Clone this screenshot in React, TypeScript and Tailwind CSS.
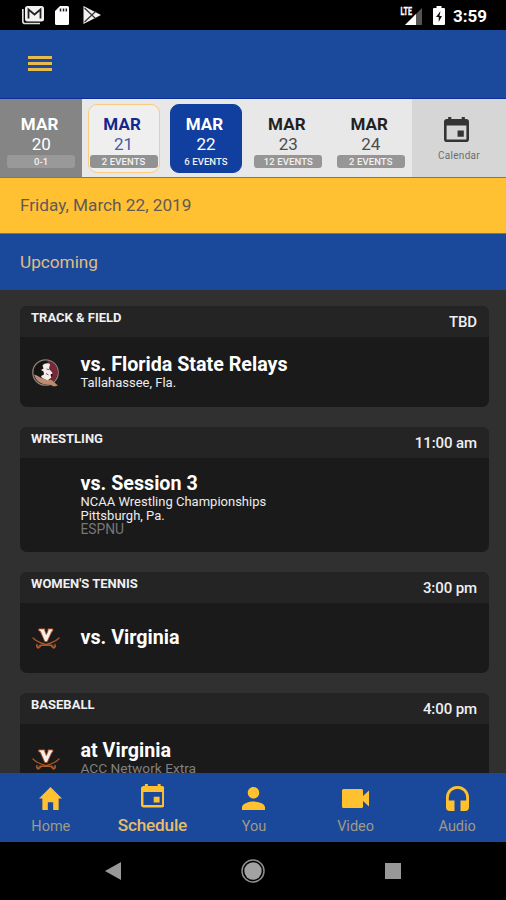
import React from "react";

type Day = { day: string; note: string; kind: "past" | "today" | "selected" | "plain" };

const days: Day[] = [
  { day: "20", note: "0-1", kind: "past" },
  { day: "21", note: "2 EVENTS", kind: "today" },
  { day: "22", note: "6 EVENTS", kind: "selected" },
  { day: "23", note: "12 EVENTS", kind: "plain" },
  { day: "24", note: "2 EVENTS", kind: "plain" },
];

const cellStyle = {
  past: "bg-[#858585]",
  today: "",
  selected: "",
  plain: "",
};
const boxStyle = {
  past: "border-transparent text-white",
  today: "border-[#fcca80] bg-[#efeff0] text-[#14288c]",
  selected: "border-[#113f9f] bg-[#113f9f] text-white",
  plain: "border-transparent text-[#222]",
};
const numberStyle = {
  past: "text-white",
  today: "text-[#4a5a9e]",
  selected: "text-white",
  plain: "text-[#4c4c4c]",
};
const pillStyle = {
  past: "bg-[#999]",
  today: "bg-[#929292]",
  selected: "",
  plain: "bg-[#969696]",
};

function DateCell({ day, note, kind }: Day) {
  return (
    <div className={`flex w-[82.4px] justify-center pt-[5px] ${cellStyle[kind]}`}>
      <div className={`flex h-[69px] w-[72px] flex-col items-center rounded-[9px] border-[1.5px] pt-[8.5px] ${boxStyle[kind]}`}>
        <div className="mr-[3px] text-[17px] font-bold leading-5 tracking-[0.1px]">MAR</div>
        <div className={`mt-[0.5px] text-[17px] leading-5 ${numberStyle[kind]}`}>{day}</div>
        <div className={`mt-px h-[13px] w-[68px] rounded-[3px] text-center text-[9.5px] font-medium leading-[13px] tracking-[0.1px] text-[#f2f2f2] ${pillStyle[kind]}`}>
          {note}
        </div>
      </div>
    </div>
  );
}

function CalendarIcon({ className }: { className: string }) {
  return (
    <svg viewBox="64 64 384 384" fill="currentColor" className={className}>
      <path d="M368 272h-96v96h96v-96zM336 64v32H176V64h-48v32h-24c-22 0-40 18-40 40v272c0 22 18 40 40 40h304c22 0 40-18 40-40V136c0-22-18-40-40-40h-24V64h-48zm72 344H104V196h304v212z" />
    </svg>
  );
}

function SeminoleLogo() {
  return (
    <svg viewBox="0 0 28 28" className="h-7 w-7">
      <circle cx="13.500" cy="13.500" r="12.700" fill="#171313" stroke="#8b827d" strokeWidth="1.300" />
      <path d="M15 1.800c7 .8 11 6 10.400 12.500-.4 4-2.400 7-5.500 9.200l-2.400-3.200 3.400-4.600-2.300-5z" fill="#7c2736" />
      <path d="M2 15.500c3 .2 6.500 3.500 10 4.500l7.500 1 6.500 5.500-4 1-5-2.200C10 26.500 3.700 22 2 15.500z" fill="#bd8b6d" />
      <path d="M10.500 6.500c1.800-2.200 5.200-3 7.500-1.500l-.8 4.500 3.600 5-2.200.8.6 3.500-3.500 2.400-5.700-2.200-1-2 3-1.500-.5-3-2.500-1.500 2.500-1.500z" fill="#f2edeb" />
      <path d="M14.500 10l3 .8M14 14.500l2.500 1.500" stroke="#a64754" strokeWidth="1" />
    </svg>
  );
}

function CavalierLogo() {
  return (
    <svg viewBox="0 0 28 22" className="h-[22px] w-7">
      <g fill="none" stroke="#a9592a" strokeLinecap="round">
        <path d="M1 10c3.500 4 8.500 6.200 22 8.500" strokeWidth="1.200" />
        <path d="M27 10c-3.500 4-8.500 6.200-22 8.500" strokeWidth="1.200" />
        <path d="M5 16.500c-.8 2 .2 3.300 1.500 3.500l2-1.800M23 16.500c.8 2-.2 3.300-1.500 3.500l-2-1.800" strokeWidth="1.500" />
        <path d="M8 17.300h12" strokeWidth="1.600" />
      </g>
      <path d="M6.800.9h6v1.900l1.500 3.700L16 2.800V.9h4.800v1.900l-1 .6L15.200 13.500h-2.400L8.300 3.300 6.800 2.700z" fill="#f5efe9" stroke="#b8522a" strokeWidth=".9" />
    </svg>
  );
}

type GameProps = {
  sport: string;
  time: string;
  logo?: React.ReactNode;
  height: string;
  logoPad: string;
  textPad: string;
  title: string;
  children?: React.ReactNode;
};

function Game(p: GameProps) {
  return (
    <section className={`shrink-0 overflow-hidden rounded-[7px] bg-[#1a1a1a] ${p.height}`}>
      <header className="flex h-[31px] justify-between bg-[#242424] pl-[11px] pr-[12px] text-[#efeff2]">
        <h2 className="pt-[3.500px] text-[13px] font-bold leading-[15px]">{p.sport}</h2>
        <span className="pt-[7.500px] text-[15px] font-medium leading-4 tracking-[-0.100px]">{p.time}</span>
      </header>
      <div className="flex">
        <div className={`w-[60.500px] shrink-0 pl-[12px] ${p.logoPad}`}>{p.logo}</div>
        <div className={`text-[13px] leading-[14px] text-[#ececec] ${p.textPad}`}>
          <h3 className="text-[19.700px] font-bold leading-[22px] text-white">{p.title}</h3>
          {p.children}
        </div>
      </div>
    </section>
  );
}

const tabs = [
  {
    label: "Home",
    icon: (
      <svg viewBox="0 0 24 24" preserveAspectRatio="none" fill="currentColor" className="h-[23px] w-[23px]">
        <path d="M12 0L0 12h3.500v12H9.200v-8h5.600v8h5.700V12H24z" />
      </svg>
    ),
  },
  { label: "Schedule", icon: <CalendarIcon className="h-[23.500px] w-[23.500px]" /> },
  {
    label: "You",
    icon: (
      <svg viewBox="64 64 384 384" fill="currentColor" className="h-[23px] w-[23px]">
        <path d="M256 256c53 0 96-43 96-96s-43-96-96-96-96 43-96 96 43 96 96 96zm0 48c-64 0-192 32-192 96v48h384v-48c0-64-128-96-192-96z" />
      </svg>
    ),
  },
  {
    label: "Video",
    icon: (
      <svg viewBox="0 0 27 19" fill="currentColor" className="h-[19px] w-[27px]">
        <path d="M1.500 0h18A1.500 1.500 0 0 1 21 1.500V7l6-5.500v16L21 12v5.500a1.500 1.500 0 0 1-1.500 1.500h-18A1.500 1.500 0 0 1 0 17.500v-16A1.500 1.500 0 0 1 1.500 0z" />
      </svg>
    ),
  },
  {
    label: "Audio",
    icon: (
      <svg viewBox="0 0 23 25" fill="currentColor" className="h-[25px] w-[23px]">
        <path d="M11.500 0A11.400 11.400 0 0 0 0 11.500V21a4 4 0 0 0 4 4h4.500V14.500H2.800v-3a8.700 8.700 0 0 1 17.400 0v3h-5.700V25H19a4 4 0 0 0 4-4v-9.500A11.400 11.400 0 0 0 11.500 0z" />
      </svg>
    ),
  },
];

export default function App() {
  return (
    <div className="flex h-[900px] w-[506px] flex-col overflow-hidden bg-black font-['Roboto',sans-serif]">
      <div className="flex h-[30px] shrink-0 items-center justify-between pl-[22px] pr-[19px] text-white">
        <div className="flex items-center">
          <svg viewBox="0 0 22 20" className="h-5 w-[22px]">
            <path d="M.8 4v12.500a2 2 0 0 0 2 2H18" fill="none" stroke="#ddd" strokeWidth="1.700" />
            <rect x="3" y="1" width="19" height="15.500" rx="2.500" fill="#f2f2f2" />
            <path d="M6.500 13.500v-9l6 5 6-5v9" fill="none" stroke="#222" strokeWidth="1.800" />
          </svg>
          <svg viewBox="0 0 14 19" className="ml-[11px] h-[19px] w-[14px]">
            <path d="M5 0h7.500A1.500 1.500 0 0 1 14 1.500v16a1.500 1.500 0 0 1-1.500 1.500h-11A1.500 1.500 0 0 1 0 17.500V5z" fill="#fff" />
            <path d="M5.500 2.500v3M8.500 2.500v3M11.300 2.500v3" stroke="#222" strokeWidth="1.500" />
          </svg>
          <svg viewBox="0 0 18 18" className="ml-[14px] h-[18px] w-[18px]">
            <path d="M.5 0L18 9 .5 18z" fill="#f2f2f2" />
            <path d="M1.500 2l11 10.500M1.500 16l11-10.500" stroke="#333" strokeWidth="1.200" />
          </svg>
        </div>
        <div className="flex items-center">
          <svg viewBox="0 0 23 19" className="h-[19px] w-[23px]">
            <path d="M22 2v17H5z" fill="#555" />
            <path d="M16 8v11H5z" fill="#fff" />
            <text x="0.500" y="9" fontSize="11" fontWeight="700" fill="#fff" stroke="#fff" strokeWidth="0.300" textLength="11.500" lengthAdjust="spacingAndGlyphs">LTE</text>
          </svg>
          <svg viewBox="0 0 12 19" className="ml-[9.500px] h-[19px] w-[12px]">
            <path d="M3.500 0h5v2H11a1 1 0 0 1 1 1v15a1 1 0 0 1-1 1H1a1 1 0 0 1-1-1V3a1 1 0 0 1 1-1h2.500z" fill="#fff" />
            <path d="M7.500 5L3 11h2.700v5L9 10H6.500z" fill="#111" />
          </svg>
          <span className="ml-[8px] mt-[2px] text-[17px] font-bold leading-5">3:59</span>
        </div>
      </div>

      <header className="flex h-[69px] shrink-0 items-center border-b border-[#0c2fa0] bg-[#1b4a9d] pl-[28px]">
        <button aria-label="Menu" className="-mt-[2px] flex w-6 flex-col gap-[3px]">
          <span className="h-[3px] bg-[#e8b950]" />
          <span className="h-[3px] bg-[#e8b950]" />
          <span className="h-[3px] bg-[#e8b950]" />
        </button>
      </header>

      <nav className="flex h-[78px] shrink-0 bg-[#e8e8e8]">
        {days.map((d) => (
          <DateCell key={d.day} {...d} />
        ))}
        <div className="flex flex-1 flex-col items-center bg-[#d6d6d6] pt-[18px]">
          <CalendarIcon className="mr-[4px] h-[25px] w-[25px] text-[#343434]" />
          <span className="mt-[8px] text-[10px] leading-3 tracking-[0.300px] text-[#6c6c6c]">Calendar</span>
        </div>
      </nav>

      <div className="h-[57px] shrink-0 border-y border-[#8f7836] bg-[#ffc132] pl-[20px] pt-[16.500px] text-[17.200px] leading-5 text-[#5f5a58]">
        Friday, March 22, 2019
      </div>
      <div className="h-[56px] shrink-0 bg-[#1a499c] pl-[20px] pt-[18px] text-[17.200px] leading-5 text-[#e2bd7e]">
        Upcoming
      </div>

      <main className="flex min-h-0 flex-1 flex-col gap-[20px] overflow-hidden bg-[#303030] pl-[20px] pr-[17px] pt-[16px]">
        <Game sport="TRACK & FIELD" time="TBD" title="vs. Florida State Relays" height="h-[101px]" logoPad="pt-[22px]" textPad="pt-[16.500px]" logo={<SeminoleLogo />}>
          <p>Tallahassee, Fla.</p>
        </Game>
        <Game sport="WRESTLING" time="11:00 am" title="vs. Session 3" height="h-[125px]" logoPad="" textPad="pt-[14.500px]">
          <p className="mt-[0.500px]">NCAA Wrestling Championships</p>
          <p>Pittsburgh, Pa.</p>
          <p className="text-[13.800px] leading-[12px] text-[#777]">ESPNU</p>
        </Game>
        <Game sport="WOMEN'S TENNIS" time="3:00 pm" title="vs. Virginia" height="h-[101px]" logoPad="pt-[25px]" textPad="pt-[23.500px]" logo={<CavalierLogo />} />
        <Game sport="BASEBALL" time="4:00 pm" title="at Virginia" height="h-[110px]" logoPad="pt-[25px]" textPad="pt-[15.500px]" logo={<CavalierLogo />}>
          <p className="-mt-px text-[13.700px] text-[#808080]">ACC Network Extra</p>
        </Game>
      </main>

      <nav className="grid h-[69px] w-[508px] shrink-0 grid-cols-5 bg-[#1a499c]">
        {tabs.map((t) => {
          const active = t.label === "Schedule";
          return (
            <button key={t.label} className="flex flex-col items-center text-[#ffc12f]">
              <span className={`flex items-center justify-center ${active ? "h-[46px]" : "h-[50px]"}`}>{t.icon}</span>
              <span
                className={
                  active
                    ? "-mt-[4px] text-[17.200px] font-medium leading-5 tracking-[-0.200px] text-[#e9bd68]"
                    : "-mt-[6px] text-[14.500px] leading-5 text-[#a09a86]"
                }
              >
                {t.label}
              </span>
            </button>
          );
        })}
      </nav>

      <div className="flex h-[58px] shrink-0 items-center justify-between bg-black pl-[105px] pr-[105px]">
        <svg viewBox="0 0 16 18" className="h-[18px] w-4">
          <path d="M16 0v18L0 9z" fill="#989898" />
        </svg>
        <svg viewBox="0 0 24 24" className="h-6 w-6">
          <circle cx="12" cy="12" r="11" fill="none" stroke="#8f8f8f" strokeWidth="1.500" />
          <circle cx="12" cy="12" r="8.700" fill="#a2a2a2" />
        </svg>
        <span className="h-4 w-4 bg-[#989898]" />
      </div>
    </div>
  );
}
